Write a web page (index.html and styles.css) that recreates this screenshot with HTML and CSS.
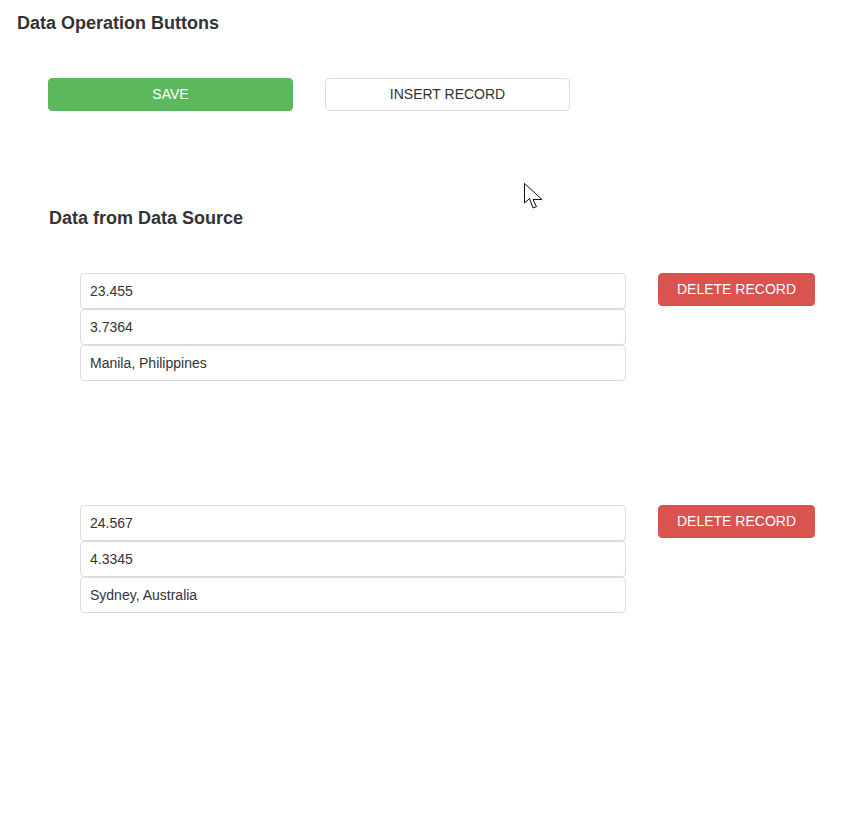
FILE: index.html
```html
<!DOCTYPE html>
<html>
<head>
<meta charset="utf-8">
<link rel="stylesheet" href="styles.css">
</head>
<body>
<div class="page">
  <h2 class="title">Data Operation Buttons</h2>
  <div class="ops">
    <button class="btn btn-save">SAVE</button>
    <button class="btn btn-insert">INSERT RECORD</button>
  </div>
  <h3 class="section">Data from Data Source</h3>
  <div class="records">
    <div class="record">
      <div class="fields">
        <input class="field" type="text" value="23.455">
        <input class="field" type="text" value="3.7364">
        <input class="field" type="text" value="Manila, Philippines">
      </div>
      <button class="btn btn-delete">DELETE RECORD</button>
    </div>
    <div class="record">
      <div class="fields">
        <input class="field" type="text" value="24.567">
        <input class="field" type="text" value="4.3345">
        <input class="field" type="text" value="Sydney, Australia">
      </div>
      <button class="btn btn-delete">DELETE RECORD</button>
    </div>
  </div>
  <svg class="cursor" width="22" height="30" viewBox="0 0 22 30">
    <path d="M1.5 1.5 V21 L6.5 16.5 L10 26 L13.5 24.7 L10 17.5 H19 Z" fill="#fff" stroke="#111" stroke-width="1" stroke-linejoin="miter"/>
  </svg>
</div>
</body>
</html>
```
FILE: styles.css
```css
html, body {
  margin: 0;
  padding: 0;
  background: #fff;
}
body {
  font-family: "Liberation Sans", Arial, sans-serif;
  color: #333;
  font-size: 14px;
}
.page {
  position: relative;
  width: 845px;
  height: 831px;
}
.title {
  margin: 0;
  padding: 13px 0 0 17px;
  font-size: 18px;
  line-height: 20px;
  font-weight: bold;
  color: #333;
}
.ops {
  display: flex;
  gap: 32px;
  padding-left: 48px;
  margin-top: 45px;
}
.btn {
  font-family: "Liberation Sans", Arial, sans-serif;
  font-size: 14px;
  height: 33px;
  border-radius: 4px;
  border: 1px solid transparent;
  padding: 0 0 2px 0;
  cursor: pointer;
}
.btn-save {
  width: 245px;
  background: #5cb85c;
  border-color: #5cb85c;
  color: #fff;
}
.btn-insert {
  width: 245px;
  background: #fff;
  border-color: #dcdcdc;
  color: #333;
}
.section {
  margin: 96px 0 0 49px;
  font-size: 18px;
  line-height: 22px;
  font-weight: bold;
  color: #333;
}
.records {
  margin-top: 44px;
  padding-left: 80px;
  display: flex;
  flex-direction: column;
  gap: 124px;
}
.record {
  display: flex;
  align-items: flex-start;
  gap: 32px;
}
.fields {
  display: flex;
  flex-direction: column;
  width: 546px;
}
.field {
  box-sizing: border-box;
  height: 36px;
  width: 546px;
  margin: 0;
  padding: 0 9px;
  border: 1px solid #dcdcdc;
  border-radius: 4px;
  font-family: "Liberation Sans", Arial, sans-serif;
  font-size: 14px;
  color: #333;
  background: #fff;
  outline: none;
}
.btn-delete {
  width: 157px;
  background: #d9534f;
  border-color: #d9534f;
  color: #fff;
}
.cursor {
  position: absolute;
  left: 523px;
  top: 182px;
}
```
